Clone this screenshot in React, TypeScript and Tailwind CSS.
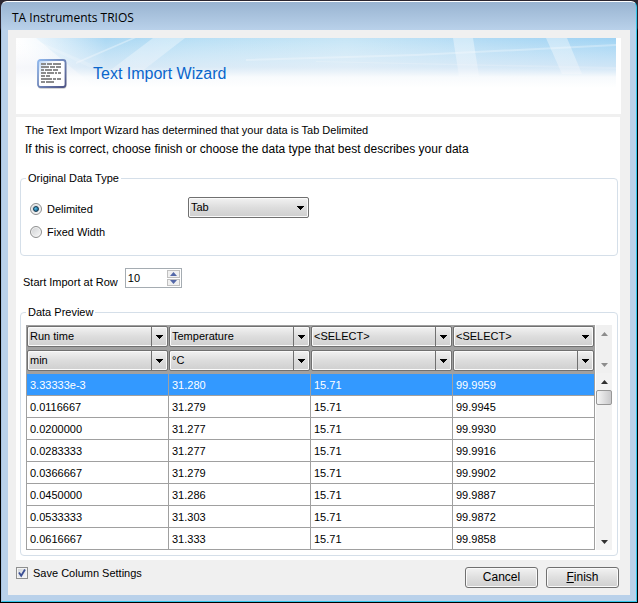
import { useState } from "react";

const rows = [
  ["3.33333e-3", "31.280", "15.71", "99.9959"],
  ["0.0116667", "31.279", "15.71", "99.9945"],
  ["0.0200000", "31.277", "15.71", "99.9930"],
  ["0.0283333", "31.277", "15.71", "99.9916"],
  ["0.0366667", "31.279", "15.71", "99.9902"],
  ["0.0450000", "31.286", "15.71", "99.9887"],
  ["0.0533333", "31.303", "15.71", "99.9872"],
  ["0.0616667", "31.333", "15.71", "99.9858"],
];

const names = ["Run time", "Temperature", "<SELECT>", "<SELECT>"];
const units = ["min", "°C", "", ""];

function Combo({ label, value, divider = false }: { label: string; value: string; divider?: boolean }) {
  return (
    <div className="relative h-[21px] w-full rounded-[2px] border border-[#707070] bg-linear-to-b from-[#f2f2f2] from-0% via-[#dddddd] via-50% to-[#cfcfcf] shadow-[inset_0_0_0_1px_#fafafa]">
      <select aria-label={label} className="block h-full w-full appearance-none bg-transparent pl-[2px] pr-4 text-[11px] leading-[19px] text-black outline-none">
        <option>{value}</option>
      </select>
      <span className={divider ? "pointer-events-none absolute inset-y-0 right-0 flex w-4 items-center justify-center border-l border-[#707070]" : "pointer-events-none absolute inset-y-0 right-0 flex w-4 items-center justify-center"}>
        <svg width="7" height="4" viewBox="0 0 7 4" shapeRendering="crispEdges" aria-hidden="true">
          <path d="M0 0h7v1H6v1H5v1H4v1H3V3H2V2H1V1H0z" fill="#000" />
        </svg>
      </span>
    </div>
  );
}

function Arrow({ up = false, color }: { up?: boolean; color: string }) {
  return (
    <svg width="7" height="4" viewBox="0 0 7 4" aria-hidden="true">
      <path d={up ? "M0 4L3.5 0L7 4z" : "M0 0h7L3.5 4z"} fill={color} />
    </svg>
  );
}

function ScrollButton({ label, up = false, disabled = false }: { label: string; up?: boolean; disabled?: boolean }) {
  return (
    <button type="button" aria-label={label} disabled={disabled} className="flex h-[17px] w-full items-center justify-center">
      <Arrow up={up} color={disabled ? "#8c8c8c" : "#303030"} />
    </button>
  );
}

function Radio({ label, checked, onChange }: { label: string; checked: boolean; onChange: () => void }) {
  return (
    <label className="flex h-[23px] items-center gap-[5px]">
      <span className="relative flex size-3 items-center justify-center">
        <input
          type="radio"
          name="type"
          checked={checked}
          onChange={onChange}
          className="size-3 appearance-none rounded-full border border-[#8e8f8f] bg-linear-to-br from-[#cdcfd1] to-[#fafafa] shadow-[inset_0_0_0_1px_#f4f4f4]"
        />
        {checked && (
          <span className="pointer-events-none absolute size-[6px] rounded-full border border-[#12384f] bg-radial-[at_35%_35%] from-[#5cc0ea] to-[#0b4f7a]" />
        )}
      </span>
      {label}
    </label>
  );
}

function WizardIcon() {
  const lines = [
    [[0, 5], [6, 5], [12, 8]],
    [[0, 8], [9, 5], [15, 5]],
    [[0, 3], [4, 7], [12, 5]],
    [[0, 5], [6, 7], [14, 2], [17, 3]],
    [[0, 4], [5, 4]],
    [[0, 11], [12, 3], [16, 4]],
    [[0, 4], [5, 8]],
  ];
  return (
    <svg width="30" height="30" viewBox="0 0 30 30" aria-hidden="true">
      <defs>
        <linearGradient id="edge" x1="0" y1="0" x2="1" y2="1">
          <stop offset="0" stopColor="#8fb7ec" />
          <stop offset="1" stopColor="#4e5384" />
        </linearGradient>
        <linearGradient id="sheet" x1="0" y1="0" x2="1" y2="1">
          <stop offset="0" stopColor="#b4d3f7" />
          <stop offset=".35" stopColor="#ffffff" />
          <stop offset="1" stopColor="#ffffff" />
        </linearGradient>
      </defs>
      <rect x="1" y="2" width="28.5" height="27.8" rx="3" fill="#9a9a9a" opacity=".55" />
      <rect x="1" y="1" width="27.5" height="27" rx="2.5" fill="url(#sheet)" stroke="url(#edge)" strokeWidth="1.8" />
      {lines.map((line, i) =>
        line.map(([x, w]) => <rect key={`${i}-${x}`} x={4 + x} y={4 + i * 3} width={w} height="2" fill="#8c8c8c" />)
      )}
    </svg>
  );
}

function Banner() {
  return (
    <header className="relative h-[76px] bg-white">
      <svg className="absolute inset-x-0 top-0 h-[50px] w-[calc(100%-5px)]" viewBox="0 0 600 50" preserveAspectRatio="none" aria-hidden="true">
        <defs>
          <linearGradient id="sky" x1="0" x2="1">
            <stop offset="0" stopColor="#ffffff" />
            <stop offset=".05" stopColor="#e2f1fb" />
            <stop offset=".15" stopColor="#a9d7f3" />
            <stop offset=".3" stopColor="#b8dff5" />
            <stop offset=".55" stopColor="#c6e5f6" />
            <stop offset=".8" stopColor="#aed9f4" />
            <stop offset="1" stopColor="#9ed2f3" />
          </linearGradient>
          <linearGradient id="fade" x1="0" x2="0" y1="0" y2="1">
            <stop offset="0" stopColor="#fff" stopOpacity="0" />
            <stop offset=".58" stopColor="#f0f2f8" stopOpacity=".6" />
            <stop offset=".78" stopColor="#fbfcfd" stopOpacity=".95" />
            <stop offset="1" stopColor="#fff" />
          </linearGradient>
          <linearGradient id="corner" x1="0" x2="1" y1=".6" y2="0">
            <stop offset="0" stopColor="#fff" />
            <stop offset="1" stopColor="#fff" stopOpacity="0" />
          </linearGradient>
        </defs>
        <rect width="600" height="50" fill="url(#sky)" />
        <path d="M0 0H20L80 50H0z" fill="url(#corner)" />
        <path d="M137 0H169L125 34H92z" fill="#fff" opacity=".35" />
        <path d="M116 0H120L60 26V24z" fill="#fff" opacity=".35" />
        <path d="M15 0L80 28L75 30L10 0z" fill="#fff" opacity=".2" />
        <path d="M437 0H457L463 38H443z" fill="#fff" opacity=".38" />
        <path d="M530 0H551L566 36H546z" fill="#fff" opacity=".38" />
        <path d="M230 21L400 16L600 6V8L400 18L230 23z" fill="#fff" opacity=".3" />
        <path d="M300 23L600 29V31L300 24z" fill="#fff" opacity=".2" />
        <rect width="600" height="50" fill="url(#fade)" />
      </svg>
      <div className="relative flex items-center gap-[26px] pl-[21px] pt-[21px]">
        <WizardIcon />
        <h1 className="text-[16px] leading-[30px] text-[#0a66cc]">Text Import Wizard</h1>
      </div>
    </header>
  );
}

export default function App() {
  const [type, setType] = useState("Delimited");
  const [save, setSave] = useState(true);
  return (
    <div className="min-h-screen bg-linear-to-b from-[#2b2630] from-[28px] to-black to-[32px] p-px font-['Liberation_Sans',Arial,sans-serif] text-[11px] leading-4 text-black">
      <div className="flex min-h-[calc(100vh-2px)] flex-col rounded-t-md border border-t-white border-r-[#35c5ea] border-b-[#35c5ea] border-l-[#a9c4e2] bg-linear-to-b from-[#99b4d1] from-0% via-[#b9d1ea] via-[28px] to-[#b9d1ea] px-[6px] pb-[6px]">
        <div className="pl-1 pt-[6px] pb-[2px] font-['Open_Sans','Noto_Sans',sans-serif] text-[12px] leading-5">TA Instruments TRIOS</div>
        <main className="flex-1 bg-[#f0f0f0] pl-2 pr-[9px] pt-2">
          <Banner />
          <form className="mt-[3px]" onSubmit={(e) => e.preventDefault()}>
            <div className="mr-px bg-white pb-1 pl-1 pr-[2px] pt-1">
              <p className="pl-[5px] leading-[19px]">The Text Import Wizard has determined that your data is Tab Delimited</p>
              <p className="pl-[5px] text-[12px] leading-[19px]">If this is correct, choose finish or choose the data type that best describes your data</p>

              <fieldset className="mt-[11px] rounded-[4px] border border-[#d5dfe9] pb-3 pl-[9px]">
                <legend className="-ml-1 px-[2px]">Original Data Type</legend>
                <div className="flex pt-[11px]">
                  <div className="w-[158px]">
                    <Radio label="Delimited" checked={type === "Delimited"} onChange={() => setType("Delimited")} />
                    <Radio label="Fixed Width" checked={type === "Fixed Width"} onChange={() => setType("Fixed Width")} />
                  </div>
                  <div className="w-[121px]">
                    <Combo label="Delimiter" value="Tab" />
                  </div>
                </div>
              </fieldset>

              <div className="mt-3 flex items-end gap-[7px] pl-[3px]">
                <label htmlFor="start" className="leading-3">Start Import at Row</label>
                <div className="flex h-5 w-[57px] border border-[#a5acb2] bg-white">
                  <input id="start" defaultValue="10" className="w-[40px] pl-[2px] leading-4 outline-none" />
                  <span className="flex flex-1 flex-col gap-px p-px">
                    <button type="button" aria-label="Increase" className="flex flex-1 items-center justify-center border border-[#c0c0c0] bg-[#f0f0f0]">
                      <Arrow up color="#5468a8" />
                    </button>
                    <button type="button" aria-label="Decrease" className="flex flex-1 items-center justify-center border border-[#c0c0c0] bg-[#f0f0f0]">
                      <Arrow color="#5468a8" />
                    </button>
                  </span>
                </div>
              </div>

              <fieldset className="mt-4 rounded-[4px] border border-[#d5dfe9] px-[5px] pb-[5px]">
                <legend className="px-[2px]">Data Preview</legend>
                <div className="flex gap-px pt-[5px]">
                  <div className="min-w-0 flex-1">
                    <table className="w-full table-fixed border-separate border-spacing-0 border-l border-[#a0a0a0] text-left">
                      <thead className="bg-[#a0a0a0]">
                        <tr>
                          {names.map((n, i) => (
                            <th key={i} className="border-r border-[#a0a0a0] pb-[2px] pt-px font-normal">
                              <Combo label={`Column ${i + 1} name`} value={n} divider={i < 3} />
                            </th>
                          ))}
                        </tr>
                        <tr>
                          {units.map((u, i) => (
                            <th key={i} className="border-r border-[#a0a0a0] pb-[3px] pt-px font-normal">
                              <Combo label={`Column ${i + 1} unit`} value={u} divider />
                            </th>
                          ))}
                        </tr>
                      </thead>
                      <tbody>
                        {rows.map((r, i) => (
                          <tr key={i} className={i === 0 ? "bg-[#3399ff] text-white" : "bg-white"}>
                            {r.map((c, j) => (
                              <td key={j} className="h-[22px] border-b border-r border-[#a0a0a0] pl-[3px] leading-5">
                                {c}
                              </td>
                            ))}
                          </tr>
                        ))}
                      </tbody>
                    </table>
                  </div>
                  <div className="flex w-4 flex-col">
                    <div className="flex h-12 flex-col justify-between bg-[#f0f0f0]">
                      <ScrollButton label="Scroll header up" up disabled />
                      <ScrollButton label="Scroll header down" disabled />
                    </div>
                    <div className="flex flex-1 flex-col bg-[#f2f2f2]">
                      <ScrollButton label="Scroll rows up" up />
                      <div className="h-[15px] rounded-[2px] border border-[#979797] bg-linear-to-r from-[#f5f5f5] to-[#c9c9cb]" />
                      <div className="flex-1" />
                      <ScrollButton label="Scroll rows down" />
                    </div>
                  </div>
                </div>
              </fieldset>
            </div>

            <div className="flex items-start justify-between pb-[6px] pr-[2px] pt-[5px]">
              <label className="flex h-4 items-center gap-[5px]">
                <span className="relative size-3">
                  <input
                    type="checkbox"
                    checked={save}
                    onChange={() => setSave(!save)}
                    className="block size-3 appearance-none border border-[#8e8f8f] bg-linear-to-br from-[#cfd3d8] to-[#fafafa] shadow-[inset_0_0_0_1px_#f4f4f4]"
                  />
                  {save && (
                    <svg className="pointer-events-none absolute inset-0" width="12" height="12" viewBox="0 0 12 12" aria-hidden="true">
                      <path d="M3 5.5L5.2 8.8L9 2.5" fill="none" stroke="#3b4f94" strokeWidth="1.8" />
                    </svg>
                  )}
                </span>
                Save Column Settings
              </label>
              <div className="flex gap-2 pt-[2px] text-[12px]">
                <button type="button" className="h-[21px] w-[73px] rounded-[3px] border border-[#707070] bg-linear-to-b from-[#f2f2f2] via-[#dfdfdf] to-[#cfcfcf] leading-[19px] shadow-[inset_0_0_0_1px_#fafafa]">
                  Cancel
                </button>
                <button type="submit" className="h-[21px] w-[73px] rounded-[3px] border border-[#707070] bg-linear-to-b from-[#f2f2f2] via-[#dfdfdf] to-[#cfcfcf] leading-[19px] shadow-[inset_0_0_0_1px_#fafafa]">
                  <span className="underline">F</span>inish
                </button>
              </div>
            </div>
          </form>
        </main>
      </div>
    </div>
  );
}
